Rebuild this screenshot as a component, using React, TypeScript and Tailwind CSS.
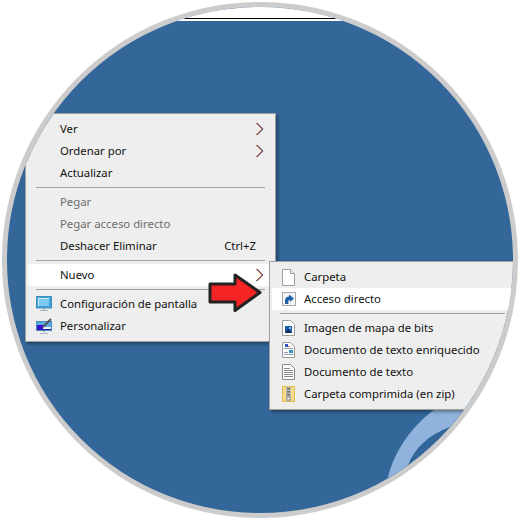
import type { ReactNode } from 'react';

type Row = {
  label?: string;
  icon?: ReactNode;
  shortcut?: string;
  arrow?: boolean;
  disabled?: boolean;
  active?: boolean;
  separator?: boolean;
};

function Chevron() {
  return (
    <svg width="10" height="14" viewBox="0 0 10 14" fill="none">
      <path d="M1.100 1 L7.100 7 L1.100 13" stroke="#f08030" strokeWidth="1" />
      <path d="M2.100 1 L8.100 7 L2.100 13" stroke="#3a78d8" strokeWidth="1" />
      <path d="M1.600 1 L7.600 7 L1.600 13" stroke="#7a2a30" strokeWidth="0.8" />
    </svg>
  );
}

function MonitorIcon() {
  return (
    <svg width="16" height="17" viewBox="0 0 16 17">
      <rect x="0.500" y="0.500" width="15" height="11.500" fill="#3aa3dc" stroke="#4a8cbc" />
      <path d="M2 2h11v8H2z" fill="#cfeaf8" />
      <path d="M3 3h10v7H3z" fill="#7cc8ee" />
      <path d="M7 12.500h2v1.500H7zM4 14h8v1H4z" fill="#a9b6c0" />
    </svg>
  );
}

function PaintIcon() {
  return (
    <svg width="16" height="17" viewBox="0 0 16 17">
      <rect x="0.500" y="3.500" width="15" height="9" fill="#5aa8e0" stroke="#4a8cbc" />
      <path d="M1 7h6v5H1z" fill="#3a10d0" />
      <path d="M7 9h8v3H7z" fill="#e8f4fb" />
      <path d="M1 11h14v1H1z" fill="#2a1ab0" />
      <path d="M7 9 L15 1" stroke="#555555" strokeWidth="2" />
      <path d="M7 13h2v1H7zM4 15h8v1H4z" fill="#a9b6c0" />
    </svg>
  );
}

function BlankIcon() {
  return (
    <svg width="13" height="17" viewBox="0 0 13 17">
      <path d="M0.500 0.500H8.500L12.500 4.500V16.500H0.500Z" fill="#ffffff" stroke="#a0a0a0" />
      <path d="M8.500 0.500V4.500H12.500" fill="#eeeeee" stroke="#a0a0a0" />
    </svg>
  );
}

function ShortcutIcon() {
  return (
    <svg width="14" height="14" viewBox="0 0 14 14">
      <rect x="0.500" y="0.500" width="13" height="13" fill="#f4f6f8" stroke="#a8a8a8" />
      <path d="M3 12V8.500C3 6 5 4.500 7 4.500V2.500L12 6.500L8 10V8C6.500 8 6 9.500 6.500 12Z" fill="#1f5fa8" />
    </svg>
  );
}

function BitmapIcon() {
  return (
    <svg width="13" height="16" viewBox="0 0 13 16">
      <path d="M0.500 0.500H8.500L12.500 4.500V15.500H0.500Z" fill="#ffffff" stroke="#a0a0a0" />
      <rect x="3" y="6" width="7" height="7" fill="#1c5ea8" />
      <path d="M3 13L6 9L10 13Z" fill="#0c2c60" />
      <rect x="7" y="7" width="2" height="2" fill="#7cc0ee" />
    </svg>
  );
}

function RichTextIcon() {
  return (
    <svg width="13" height="16" viewBox="0 0 13 16">
      <path d="M0.500 0.500H8.500L12.500 4.500V15.500H0.500Z" fill="#ffffff" stroke="#9a9a9a" />
      <path d="M3 2h3v3H3z" fill="#3050c0" />
      <path d="M6 4h2v1H6z" fill="#d08040" />
      <path d="M2 6h9v1H2zM2 10h4v1H2zM2 12h9v1H2z" fill="#8a9aaa" />
      <path d="M7 8h4v3H7z" fill="#3a8ec8" />
    </svg>
  );
}

function TextIcon() {
  return (
    <svg width="13" height="16" viewBox="0 0 13 16">
      <path d="M0.500 0.500H8.500L12.500 4.500V15.500H0.500Z" fill="#ffffff" stroke="#8a8a8a" />
      <path d="M2 4h6v1H2zM2 6h9v1H2zM2 8h9v1H2zM2 10h9v1H2zM2 12h9v1H2z" fill="#8a8a8a" />
    </svg>
  );
}

function ZipIcon() {
  return (
    <svg width="13" height="16" viewBox="0 0 13 16">
      <rect x="0.500" y="0.500" width="12" height="15" fill="#f7dc8c" stroke="#e4bc50" />
      <rect x="4" y="1" width="5" height="14" fill="#b8b8b0" />
      <path d="M5 2h3v1.500H5zM5 5h3v1.500H5zM5 8h3v1.500H5z" fill="#70706a" />
      <rect x="5" y="11" width="3" height="3" fill="#e8e8e0" stroke="#70706a" strokeWidth="0.500" />
    </svg>
  );
}

const mainRows: Row[] = [
  { label: 'Ver', arrow: true },
  { label: 'Ordenar por', arrow: true },
  { label: 'Actualizar' },
  { separator: true },
  { label: 'Pegar', disabled: true },
  { label: 'Pegar acceso directo', disabled: true },
  { label: 'Deshacer Eliminar', shortcut: 'Ctrl+Z' },
  { separator: true },
  { label: 'Nuevo', arrow: true, active: true },
  { separator: true },
  { label: 'Configuración de pantalla', icon: <MonitorIcon /> },
  { label: 'Personalizar', icon: <PaintIcon /> },
];

const subRows: Row[] = [
  { label: 'Carpeta', icon: <BlankIcon /> },
  { label: 'Acceso directo', icon: <ShortcutIcon />, active: true },
  { separator: true },
  { label: 'Imagen de mapa de bits', icon: <BitmapIcon /> },
  { label: 'Documento de texto enriquecido', icon: <RichTextIcon /> },
  { label: 'Documento de texto', icon: <TextIcon /> },
  { label: 'Carpeta comprimida (en zip)', icon: <ZipIcon /> },
];

function MainMenu() {
  return (
    <div className="absolute left-[18px] top-[106px] w-[251px] border border-[#a0a0a0] bg-[#eeeeee] py-1 pl-[2px] shadow-[2px_2px_3px_rgba(0,0,0,0.35)]">
      {mainRows.map((row, i) =>
        row.separator ? (
          <div key={i} className="flex h-[7px] items-center pl-[8px] pr-[10px]">
            <div className="h-px w-full bg-[#a0a0a0]" />
          </div>
        ) : (
          <div
            key={i}
            className={`flex h-[22px] items-center pl-[8px] pr-[10px] ${row.active ? 'bg-white' : ''} ${row.disabled ? 'text-[#6d6d6d]' : 'text-[#111111]'}`}
          >
            <span className="flex w-[24px] justify-start">{row.icon}</span>
            <span className="flex-1">{row.label}</span>
            {row.shortcut && <span className="mr-[9px]">{row.shortcut}</span>}
            {row.arrow && <Chevron />}
          </div>
        ),
      )}
    </div>
  );
}

function SubMenu() {
  return (
    <div className="absolute left-[262px] top-[254px] w-[255px] border border-[#a0a0a0] bg-[#eeeeee] py-1 pl-[2px] shadow-[2px_2px_3px_rgba(0,0,0,0.35)]">
      {subRows.map((row, i) =>
        row.separator ? (
          <div key={i} className="flex h-[7px] items-center pl-[8px] pr-[18px]">
            <div className="h-px w-full bg-[#a0a0a0]" />
          </div>
        ) : (
          <div key={i} className={`flex h-[22px] items-center pl-[10px] text-[#111111] ${row.active ? 'bg-white' : ''}`}>
            <span className="flex w-[22px] justify-start">{row.icon}</span>
            <span>{row.label}</span>
          </div>
        ),
      )}
    </div>
  );
}

export default function App() {
  return (
    <div className="h-[520px] w-[520px] bg-white pl-[2px] pt-[2px] font-['Noto_Sans',sans-serif] text-[11.35px]">
      <div className="relative h-[516px] w-[516px] overflow-hidden rounded-full border-[5px] border-[#cccccc] bg-[#336699]">
        <div className="h-[11px] bg-white" />
        <div className="ml-[178px] h-px w-[150px] bg-black" />
        <div className="h-[2px] bg-white" />
        <svg className="absolute left-0 top-0" width="506" height="506" viewBox="0 0 506 506">
          <path
            d="M379 478 L381 470 C388 443 405 418 431 400 L480 390 L460 412 L443 420 C421 428 408 441 401 458 L396 472 Z"
            fill="#8fb3dc"
          />
        </svg>
        <MainMenu />
        <SubMenu />
        <svg className="absolute left-[199px] top-[265px]" width="60" height="44" viewBox="0 0 60 44">
          <path
            d="M4 12H29V3L54 20.500L29 38.500V30H4Z"
            fill="#f62424"
            stroke="#222222"
            strokeWidth="3"
            strokeLinejoin="round"
          />
        </svg>
      </div>
    </div>
  );
}
